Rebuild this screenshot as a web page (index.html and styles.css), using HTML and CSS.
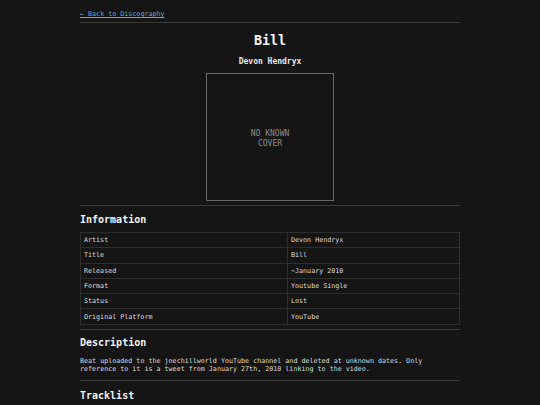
FILE: index.html
```html
<!DOCTYPE html>
<html>
<head>
<meta charset="utf-8">
<link rel="stylesheet" href="styles.css">
</head>
<body>
<div class="page">
  <a class="back" href="#">← Back to Discography</a>
  <hr class="rule">
  <h1 class="title">Bill</h1>
  <div class="artist">Devon Hendryx</div>
  <div class="cover-wrap">
    <div class="cover">NO KNOWN<br>COVER</div>
  </div>
  <hr class="rule">
  <h2 class="section section-first">Information</h2>
  <table class="info">
    <tr><td>Artist</td><td>Devon Hendryx</td></tr>
    <tr><td>Title</td><td>Bill</td></tr>
    <tr><td>Released</td><td>~January 2010</td></tr>
    <tr><td>Format</td><td>Youtube Single</td></tr>
    <tr><td>Status</td><td>Lost</td></tr>
    <tr><td>Original Platform</td><td>YouTube</td></tr>
  </table>
  <hr class="rule">
  <h2 class="section">Description</h2>
  <p class="desc">Beat uploaded to the joechillworld YouTube channel and deleted at unknown dates. Only reference to it is a tweet from January 27th, 2010 linking to the video.</p>
  <hr class="rule">
  <h2 class="section section-last">Tracklist</h2>
</div>
</body>
</html>
```
FILE: styles.css
```css
html, body {
  margin: 0;
  padding: 0;
  background: #151515;
  color: #e8e8e8;
  font-family: "DejaVu Sans Mono", "Liberation Mono", monospace;
  font-size: 6.7px;
}
.page {
  width: 380px;
  margin: 0 auto;
  padding-top: 10px;
}
.back {
  display: inline-block;
  color: #6aa8d4;
  text-decoration: underline;
  line-height: 8px;
}
.rule {
  border: none;
  border-top: 1px solid #3a3a3a;
  margin: 4px 0 0 0;
  height: 0;
}
.title {
  text-align: center;
  font-size: 13.4px;
  font-weight: bold;
  margin: 10px 0 0 0;
  line-height: 16px;
  color: #f2f2f2;
}
.artist {
  text-align: center;
  font-size: 8px;
  font-weight: bold;
  margin-top: 8px;
  line-height: 10px;
}
.cover-wrap {
  display: flex;
  justify-content: center;
  margin-top: 6px;
  margin-bottom: 4px;
}
.cover {
  box-sizing: border-box;
  width: 128px;
  height: 128px;
  padding-top: 4px;
  border: 1.5px solid #6a6a6a;
  display: flex;
  align-items: center;
  justify-content: center;
  text-align: center;
  color: #8a8a8a;
  font-size: 8px;
  line-height: 10px;
}
.section {
  font-size: 10px;
  font-weight: bold;
  margin: 7px 0 0 0;
  line-height: 12px;
  color: #f2f2f2;
}
.section-first {
  margin-top: 8px;
}
.section-last {
  margin-top: 9px;
}
.info {
  width: 100%;
  border-collapse: collapse;
  margin-top: 6px;
  margin-bottom: 4px;
}
.info td {
  border: 1px solid #2e2e2e;
  padding: 0 3px;
  height: 14.3px;
  line-height: 14px;
  color: #dcdcdc;
}
.info td:first-child {
  width: 200px;
}
.desc {
  margin: 8px 0 0 0;
  line-height: 8px;
  color: #dcdcdc;
  padding-bottom: 3px;
}
```
